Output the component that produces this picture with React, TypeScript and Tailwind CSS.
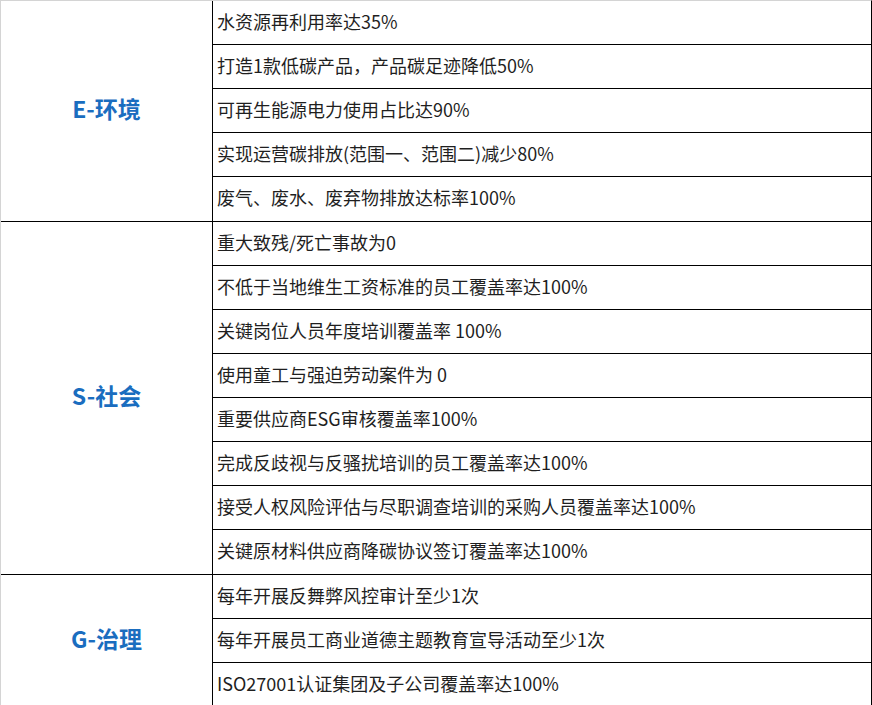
const GROUPS: Array<{ label: string; items: string[] }> = [
  {
    label: "E-环境",
    items: [
      "水资源再利用率达35%",
      "打造1款低碳产品，产品碳足迹降低50%",
      "可再生能源电力使用占比达90%",
      "实现运营碳排放(范围一、范围二)减少80%",
      "废气、废水、废弃物排放达标率100%",
    ],
  },
  {
    label: "S-社会",
    items: [
      "重大致残/死亡事故为0",
      "不低于当地维生工资标准的员工覆盖率达100%",
      "关键岗位人员年度培训覆盖率 100%",
      "使用童工与强迫劳动案件为 0",
      "重要供应商ESG审核覆盖率100%",
      "完成反歧视与反骚扰培训的员工覆盖率达100%",
      "接受人权风险评估与尽职调查培训的采购人员覆盖率达100%",
      "关键原材料供应商降碳协议签订覆盖率达100%",
    ],
  },
  {
    label: "G-治理",
    items: [
      "每年开展反舞弊风控审计至少1次",
      "每年开展员工商业道德主题教育宣导活动至少1次",
      "ISO27001认证集团及子公司覆盖率达100%",
    ],
  },
];

export default function App() {
  return (
    <div
      className="w-[872px] bg-white border-t border-l border-t-[#d4d4d4] border-l-[#d4d4d4] border-r border-r-black"
      style={{ fontFamily: '"Noto Sans CJK SC", "Noto Sans", sans-serif' }}
    >
      {GROUPS.map((group) => (
        <div key={group.label} className="flex border-b border-black">
          <div className="flex w-[212px] shrink-0 items-center justify-center border-r border-black pb-[5px]">
            <span className="text-[23px] font-bold text-[#1a6dbf]">{group.label}</span>
          </div>
          <div className="flex flex-1 flex-col">
            {group.items.map((item, i) => (
              <div
                key={item}
                className={`flex h-[44px] items-center pb-[3px] pl-[4px] text-[18px] text-[#1f1f1f] ${
                  i < group.items.length - 1 ? "border-b border-black" : "h-[43px]"
                }`}
              >
                {item}
              </div>
            ))}
          </div>
        </div>
      ))}
    </div>
  );
}
